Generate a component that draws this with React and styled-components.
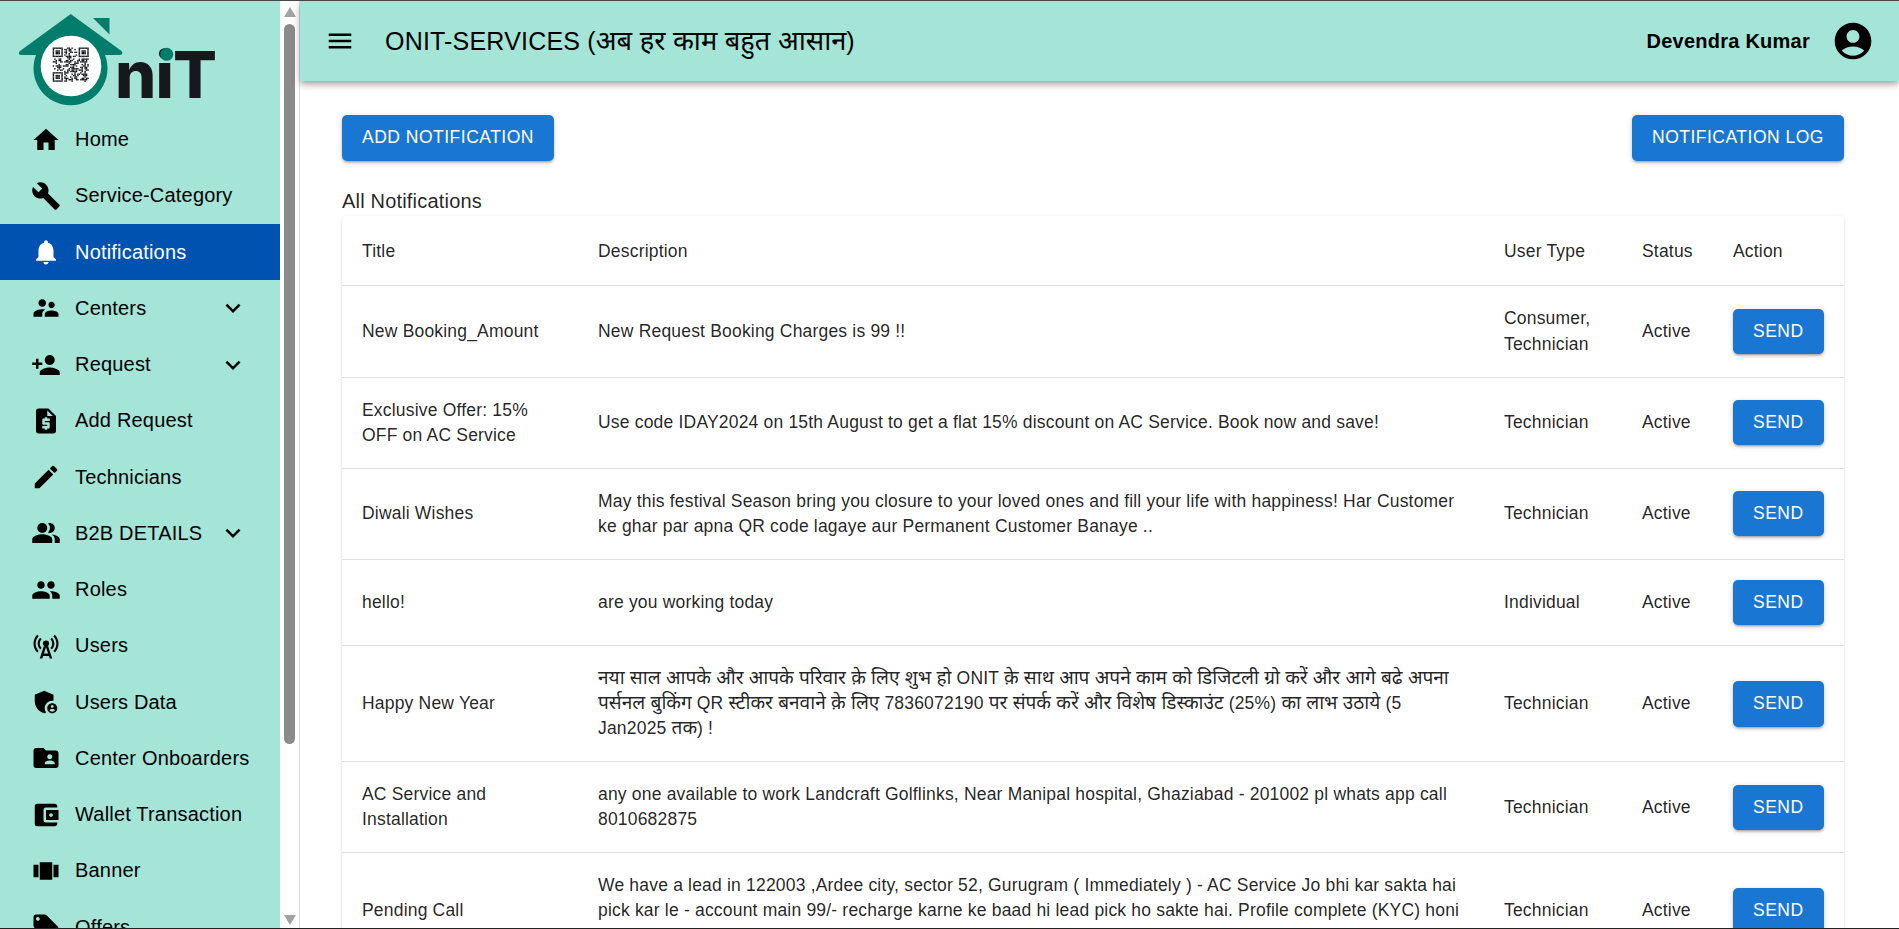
import React from "react";
import styled, { createGlobalStyle } from "styled-components";
import {
  MdHome, MdBuild, MdNotifications, MdSupervisorAccount, MdPersonAdd, MdRequestQuote, MdEdit,
  MdPeopleAlt, MdPeople, MdCellTower, MdAdminPanelSettings, MdFolderShared,
  MdAccountBalanceWallet, MdViewCarousel, MdLocalOffer, MdExpandMore, MdMenu, MdAccountCircle,
} from "react-icons/md";

const Global = createGlobalStyle`
  html, body { margin: 0; padding: 0; height: 100%; overflow: hidden; background: #fff; }
  body { font-family: "Liberation Sans", "Noto Sans", sans-serif; color: rgba(0,0,0,.87); }
  * { box-sizing: border-box; }
`;

const Page = styled.div`
  display: flex;
  height: 100vh;
  overflow: hidden;
  border-top: 1px solid #474747;
  border-bottom: 1px solid #222;
`;
const Drawer = styled.aside`
  display: flex;
  flex: 0 0 300px;
  border-right: 1px solid #dcdcdc;
`;
const SideNav = styled.nav`
  flex: 0 0 280px;
  background: #a5e5d8;
  overflow: hidden;
`;
const LogoBox = styled.div`
  height: 110.5px;
  svg { display: block; }
`;
const NavItem = styled.div`
  display: flex;
  align-items: center;
  height: 56.25px;
  padding: 0 32px 0 31px;
  font-size: 20px;
  letter-spacing: .19px;
  color: ${p => (p.$active ? "#fff" : "#000")};
  background: ${p => (p.$active ? "#0052b1" : "transparent")};
`;
const NavIcon = styled.span`
  display: flex;
  flex: 0 0 44px;
  font-size: 30px;
`;
const NavLabel = styled.span`
  flex: 1;
  white-space: nowrap;
`;
const Chevron = styled(MdExpandMore)`
  flex: none;
  font-size: 30px;
`;
const Rail = styled.div`
  flex: 0 0 19px;
  display: flex;
  flex-direction: column;
  align-items: center;
  background: #fff;
  padding: 6px 0 3px;
`;
const ArrowUp = styled.div`
  flex: none;
  width: 0; height: 0;
  border-left: 6.5px solid transparent;
  border-right: 6.5px solid transparent;
  border-bottom: 10px solid #a3a3a3;
`;
const ArrowDown = styled(ArrowUp)`
  border-bottom: 0;
  border-top: 10px solid #a3a3a3;
`;
const Thumb = styled.div`
  flex: none;
  width: 11px;
  height: 720px;
  margin: 7px 0 auto;
  border-radius: 6px;
  background: #8b8b8b;
`;
const Content = styled.div`
  flex: 1;
  min-width: 0;
  display: flex;
  flex-direction: column;
`;
const AppBar = styled.header`
  flex: none;
  position: relative;
  z-index: 1;
  display: flex;
  align-items: center;
  height: 80px;
  padding: 0 24px 0 25px;
  background: #a5e5d8;
  color: #000;
  box-shadow: 0 2.5px 5px -1px rgba(0,0,0,.2), 0 5px 6px 0 rgba(0,0,0,.14), 0 1px 12px 0 rgba(0,0,0,.12);
`;
const MenuIcon = styled(MdMenu)`
  flex: none;
  font-size: 30px;
`;
const AppTitle = styled.h1`
  flex: 1;
  margin: 0 0 0 30px;
  font-size: 25px;
  line-height: 40px;
  font-weight: 400;
  letter-spacing: .19px;
  white-space: nowrap;
`;
const UserName = styled.span`
  font-size: 20px;
  font-weight: 700;
  letter-spacing: .25px;
  margin-right: 21px;
`;
const Avatar = styled(MdAccountCircle)`
  flex: none;
  font-size: 44px;
`;
const Main = styled.main`
  flex: 1;
  min-height: 0;
  overflow: hidden;
  padding: 34px 55px 0 42px;
`;
const Actions = styled.div`
  display: flex;
  justify-content: space-between;
`;
const Button = styled.button`
  display: inline-block;
  vertical-align: top;
  height: 45.6px;
  padding: 0 20px;
  border: 0;
  border-radius: 5px;
  background: #1976d2;
  color: #fff;
  font: 500 17.5px "Liberation Sans", sans-serif;
  letter-spacing: .5px;
  text-transform: uppercase;
  white-space: nowrap;
  box-shadow: 0 3px 2px -2px rgba(0,0,0,.2), 0 2px 3px 0 rgba(0,0,0,.14), 0 1px 6px 0 rgba(0,0,0,.12);
`;
const SectionTitle = styled.div`
  margin-top: 28.4px;
  height: 27px;
  font-size: 20px;
  line-height: 24px;
  letter-spacing: .19px;
  color: rgba(0,0,0,.87);
`;
const Card = styled.div`
  border-radius: 5px;
  background: #fff;
  box-shadow: 0 2.5px 1px -1px rgba(0,0,0,.2), 0 1px 1px 0 rgba(0,0,0,.14), 0 1px 4px 0 rgba(0,0,0,.12);
`;
const Table = styled.table`
  width: 100%;
  table-layout: fixed;
  border-collapse: collapse;
  font-size: 17.5px;
  line-height: 25.03px;
  letter-spacing: .19px;
`;
const Col = styled.col`
  width: ${p => p.$w}px;
`;
const HeadCell = styled.th`
  height: 70px;
  padding: 21px 20px 19px;
  border-bottom: 1px solid #e0e0e0;
  font-weight: 400;
  text-align: left;
`;
const Cell = styled.td`
  padding: 20px;
  border-bottom: 1px solid #e0e0e0;
  vertical-align: middle;
`;
const Deva = styled.span`
  font-size: 1.09em;
  line-height: 0;
  letter-spacing: 0;
`;

/* Devanagari runs are set a little larger, as the system font of the original is wider */
function Mixed({ children }) {
  const parts = children.split(/([\u0900-\u097F][\u0900-\u097F\s]*[\u0900-\u097F]|[\u0900-\u097F])/);
  return parts.map((p, i) => (i % 2 ? <Deva key={i}>{p}</Deva> : p));
}

const QRSIZE = 25;
function qrCells() {
  const out = [];
  const inFinder = (x, y, ox, oy) => x >= ox && x < ox + 7 && y >= oy && y < oy + 7;
  const finderOn = (x, y, ox, oy) => {
    const a = x - ox, b = y - oy;
    return a === 0 || a === 6 || b === 0 || b === 6 || (a >= 2 && a <= 4 && b >= 2 && b <= 4);
  };
  let s = 7;
  for (let y = 0; y < QRSIZE; y++) {
    for (let x = 0; x < QRSIZE; x++) {
      s = (s * 73 + 41) % 1009;
      let on = s % 100 < 48;
      const origins = [[0, 0], [QRSIZE - 7, 0], [0, QRSIZE - 7]];
      let finderHit = false;
      for (const [ox, oy] of origins) {
        if (inFinder(x, y, ox, oy)) { on = finderOn(x, y, ox, oy); finderHit = true; }
      }
      if (!finderHit) {
        for (const [ox, oy] of origins) {
          if (x >= ox - 1 && x <= ox + 7 && y >= oy - 1 && y <= oy + 7) on = false;
        }
      }
      if (on) out.push([x, y]);
    }
  }
  return out;
}
const QR = qrCells();

function Logo() {
  return (
    <svg width="240" height="110" viewBox="0 0 240 110" aria-label="OniT logo">
      <text x="115" y="97" fontFamily="Inter, sans-serif" fontWeight="800" fontSize="65" fill="#17181c" textLength="102">niT</text>
      <circle cx="166.7" cy="53.3" r="6.5" fill="#027d6c" />
      <path d="M93 17h16.5v16.5z" fill="#027d6c" />
      <path d="M70.7 13 L121.5 50 Q124 53 120 54 L105 54 A37 37 0 1 1 36 54 L21 54 Q17 53 20 50 Z" fill="#027d6c" />
      <circle cx="71" cy="65" r="30.3" fill="#fff" />
      <g transform="translate(52.7 46.5) scale(1.44 1.37)" fill="#17181c">
        {QR.map(([x, y]) => <rect key={x + "-" + y} x={x} y={y} width="1.02" height="1.02" />)}
      </g>
    </svg>
  );
}

const NAV = [
  [MdHome, "Home"], [MdBuild, "Service-Category"], [MdNotifications, "Notifications", 0, 1],
  [MdSupervisorAccount, "Centers", 1], [MdPersonAdd, "Request", 1], [MdRequestQuote, "Add Request"],
  [MdEdit, "Technicians"], [MdPeopleAlt, "B2B DETAILS", 1], [MdPeople, "Roles"],
  [MdCellTower, "Users"], [MdAdminPanelSettings, "Users Data"], [MdFolderShared, "Center Onboarders"],
  [MdAccountBalanceWallet, "Wallet Transaction"], [MdViewCarousel, "Banner"], [MdLocalOffer, "Offers"],
];

const ROWS = [
  ["New Booking_Amount", "New Request Booking Charges is 99 !!", "Consumer, Technician"],
  ["Exclusive Offer: 15% OFF on AC Service", "Use code IDAY2024 on 15th August to get a flat 15% discount on AC Service. Book now and save!", "Technician"],
  ["Diwali Wishes", "May this festival Season bring you closure to your loved ones and fill your life with happiness! Har Customer ke ghar par apna QR code lagaye aur Permanent Customer Banaye ..", "Technician"],
  ["hello!", "are you working today", "Individual"],
  ["Happy New Year", "नया साल आपके और आपके परिवार क़े लिए शुभ हो ONIT क़े साथ आप अपने काम को डिजिटली ग्रो करें और आगे बढे अपना पर्सनल बुकिंग QR स्टीकर बनवाने क़े लिए 7836072190 पर संपर्क करें और विशेष डिस्काउंट (25%) का लाभ उठाये (5 Jan2025 तक) !", "Technician"],
  ["AC Service and Installation", "any one available to work Landcraft Golflinks, Near Manipal hospital, Ghaziabad - 201002 pl whats app call 8010682875", "Technician"],
  ["Pending Call", "We have a lead in 122003 ,Ardee city, sector 52, Gurugram ( Immediately ) - AC Service Jo bhi kar sakta hai pick kar le - account main 99/- recharge karne ke baad hi lead pick ho sakte hai. Profile complete (KYC) honi chahiye.", "Technician"],
];

export default function App() {
  return (
    <>
      <Global />
      <Page>
        <Drawer>
          <SideNav>
            <LogoBox><Logo /></LogoBox>
            {NAV.map(([Icon, label, more, active]) => (
              <NavItem key={label} $active={active}>
                <NavIcon><Icon /></NavIcon>
                <NavLabel>{label}</NavLabel>
                {more ? <Chevron /> : null}
              </NavItem>
            ))}
          </SideNav>
          <Rail>
            <ArrowUp />
            <Thumb />
            <ArrowDown />
          </Rail>
        </Drawer>
        <Content>
          <AppBar>
            <MenuIcon />
            <AppTitle><Mixed>ONIT-SERVICES (अब हर काम बहुत आसान)</Mixed></AppTitle>
            <UserName>Devendra Kumar</UserName>
            <Avatar />
          </AppBar>
          <Main>
            <Actions>
              <Button>Add Notification</Button>
              <Button>Notification Log</Button>
            </Actions>
            <SectionTitle>All Notifications</SectionTitle>
            <Card>
              <Table>
                <colgroup>
                  <Col $w={236} /><Col $w={906} /><Col $w={138} /><Col $w={91} /><Col $w={131} />
                </colgroup>
                <thead>
                  <tr>
                    <HeadCell>Title</HeadCell>
                    <HeadCell>Description</HeadCell>
                    <HeadCell>User Type</HeadCell>
                    <HeadCell>Status</HeadCell>
                    <HeadCell>Action</HeadCell>
                  </tr>
                </thead>
                <tbody>
                  {ROWS.map(([t, d, u]) => (
                    <tr key={t}>
                      <Cell>{t}</Cell>
                      <Cell><Mixed>{d}</Mixed></Cell>
                      <Cell>{u}</Cell>
                      <Cell>Active</Cell>
                      <Cell><Button>Send</Button></Cell>
                    </tr>
                  ))}
                </tbody>
              </Table>
            </Card>
          </Main>
        </Content>
      </Page>
    </>
  );
}
